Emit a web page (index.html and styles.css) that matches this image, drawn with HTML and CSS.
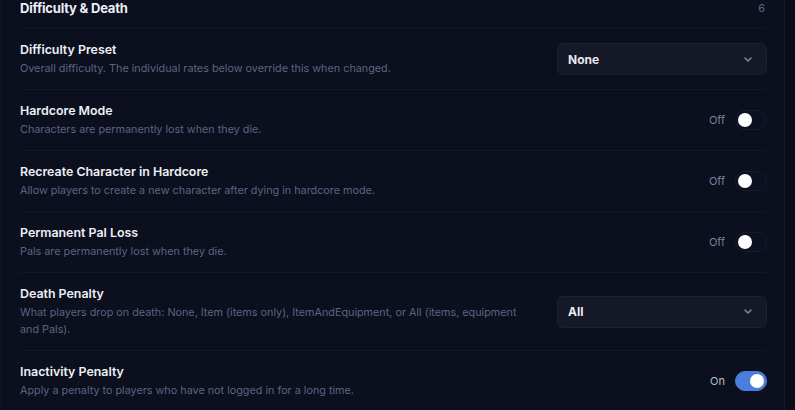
FILE: index.html
```html
<!DOCTYPE html>
<html lang="en">
<head>
  <meta charset="UTF-8">
  <meta name="viewport" content="width=device-width, initial-scale=1.0">
  <title>Server Settings</title>
  <link rel="stylesheet" href="styles.css">
</head>
<body>
  <div class="section">
    <div class="section-head">
      <h2>Difficulty &amp; Death</h2>
      <span class="count">6</span>
    </div>

    <div class="row">
      <div class="info">
        <h3>Difficulty Preset</h3>
        <p>Overall difficulty. The individual rates below override this when changed.</p>
      </div>
      <div class="select">
        <span>None</span>
        <svg class="chev" width="8" height="5" viewBox="0 0 8 5"><path d="M1 1l3 3 3-3" fill="none" stroke="currentColor" stroke-width="1.6" stroke-linecap="round" stroke-linejoin="round"/></svg>
      </div>
    </div>

    <div class="row">
      <div class="info">
        <h3>Hardcore Mode</h3>
        <p>Characters are permanently lost when they die.</p>
      </div>
      <div class="switch-wrap">
        <span class="state">Off</span>
        <span class="switch"><span class="knob"></span></span>
      </div>
    </div>

    <div class="row">
      <div class="info">
        <h3>Recreate Character in Hardcore</h3>
        <p>Allow players to create a new character after dying in hardcore mode.</p>
      </div>
      <div class="switch-wrap">
        <span class="state">Off</span>
        <span class="switch"><span class="knob"></span></span>
      </div>
    </div>

    <div class="row">
      <div class="info">
        <h3>Permanent Pal Loss</h3>
        <p>Pals are permanently lost when they die.</p>
      </div>
      <div class="switch-wrap">
        <span class="state">Off</span>
        <span class="switch"><span class="knob"></span></span>
      </div>
    </div>

    <div class="row">
      <div class="info">
        <h3>Death Penalty</h3>
        <p>What players drop on death: None, Item (items only), ItemAndEquipment, or All (items, equipment and Pals).</p>
      </div>
      <div class="select">
        <span>All</span>
        <svg class="chev" width="8" height="5" viewBox="0 0 8 5"><path d="M1 1l3 3 3-3" fill="none" stroke="currentColor" stroke-width="1.6" stroke-linecap="round" stroke-linejoin="round"/></svg>
      </div>
    </div>

    <div class="row">
      <div class="info">
        <h3>Inactivity Penalty</h3>
        <p>Apply a penalty to players who have not logged in for a long time.</p>
      </div>
      <div class="switch-wrap">
        <span class="state on">On</span>
        <span class="switch on"><span class="knob"></span></span>
      </div>
    </div>
  </div>
</body>
</html>
```

FILE: styles.css
```css
body {
  margin: 0;
  background: #090c18;
  font-family: Inter, "Noto Sans", sans-serif;
  overflow: hidden;
}
.section {
  box-sizing: border-box;
  width: 785px;
  padding: 0 17px 0 19px;
  background: #0b0f1e;
  border-left: 1px solid #0f1424;
  border-right: 1px solid #141a2b;
}
.section-head {
  display: flex;
  justify-content: space-between;
  align-items: flex-start;
  height: 28px;
  border-bottom: 1px solid #131828;
}
.section-head h2 {
  margin: 0;
  font-size: 13px;
  line-height: 16px;
  font-weight: 700;
  color: #eceef5;
  letter-spacing: -0.2px;
}
.count {
  font-size: 11px;
  line-height: 16px;
  color: #5f6683;
  margin-right: 2px;
}
.row {
  display: flex;
  align-items: center;
  justify-content: space-between;
  padding: 12px 0;
  border-bottom: 1px solid #131828;
}
.row:last-child {
  border-bottom: none;
}
.info {
  max-width: 500px;
}
.info h3 {
  margin: 0;
  font-size: 12.4px;
  line-height: 17px;
  font-weight: 600;
  color: #eef0f6;
}
.info p {
  margin: 2px 0 0;
  font-size: 10.8px;
  line-height: 17px;
  color: #5d6482;
}
.select {
  width: 210px;
  height: 32px;
  box-sizing: border-box;
  display: flex;
  align-items: center;
  justify-content: space-between;
  padding: 0 14px 0 10px;
  background: #151927;
  border: 1px solid #1c2132;
  border-radius: 6px;
  font-size: 12px;
  font-weight: 700;
  color: #e8eaf1;
}
.chev {
  color: #7d839a;
}
.switch-wrap {
  display: flex;
  align-items: center;
  gap: 10px;
}
.state {
  font-size: 11px;
  color: #7a81a0;
}
.state.on {
  color: #b9bdcc;
}
.switch {
  position: relative;
  width: 32px;
  height: 20px;
  box-sizing: border-box;
  border-radius: 10px;
  background: #0c1020;
  border: 1px solid #171c2c;
}
.knob {
  position: absolute;
  top: 2px;
  left: 2px;
  width: 14px;
  height: 14px;
  border-radius: 50%;
  background: #ffffff;
}
.switch.on {
  background: #4b7ddb;
  border-color: #4b7ddb;
}
.switch.on .knob {
  left: 14px;
}
```
